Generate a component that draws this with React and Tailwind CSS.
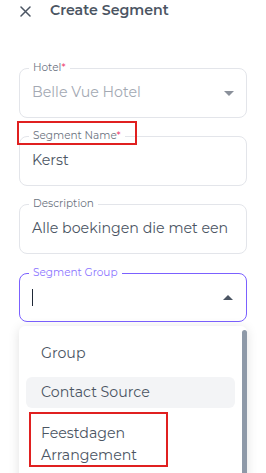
import React from "react";

const font = { fontFamily: "Montserrat, 'Open Sans', 'Noto Sans', sans-serif" };

function Field({ label, required, children, focused, className = "" }) {
  return (
    <div
      className={`relative mx-[19px] h-[50px] rounded-[8px] border ${
        focused ? "border-[#7b61ff]" : "border-[#e3e5ea]"
      } ${className}`}
    >
      <div
        className={`absolute left-[9px] top-[-8px] bg-white px-[4px] text-[10.5px] leading-[14px] ${
          focused ? "text-[#8b74ff]" : "text-[#6b7280]"
        }`}
      >
        {label}
        {required && <span className="text-[#ef4470]">*</span>}
      </div>
      {children}
    </div>
  );
}

export default function App() {
  return (
    <div className="relative h-[473px] w-[266px] overflow-hidden bg-white" style={font}>
      <div className="flex h-[22px] items-center pl-[20px]">
        <svg width="11" height="11" viewBox="0 0 11 11" className="mt-[1px]">
          <path d="M1 1L10 10M10 1L1 10" stroke="#4b5563" strokeWidth="1.5" strokeLinecap="round" />
        </svg>
        <span className="ml-[19px] text-[14.2px] font-semibold text-[#4b5563]">Create Segment</span>
      </div>

      <div className="mt-[46px] flex flex-col">
        <Field label="Hotel" required>
          <div className="flex h-full items-center justify-between pl-[12px] pr-[12px]">
            <span className="text-[14.2px] text-[#a3a9b3]">Belle Vue Hotel</span>
            <svg width="10" height="5" viewBox="0 0 10 5">
              <path d="M0 0H10L5 5Z" fill="#8a909a" />
            </svg>
          </div>
        </Field>
        <Field label="Segment Name" required className="mt-[18px]">
          <div className="flex h-full items-center pl-[12px]">
            <span className="text-[14.2px] text-[#4b5563]">Kerst</span>
          </div>
        </Field>
        <Field label="Description" className="mt-[18px]">
          <div className="flex h-full items-center overflow-hidden whitespace-nowrap pl-[12px]">
            <span className="text-[14.2px] text-[#4b5563]">Alle boekingen die met een</span>
          </div>
        </Field>
        <Field label="Segment Group" focused className="mt-[19px] !h-[49px]">
          <div className="flex h-full items-center justify-between pl-[12px] pr-[13px]">
            <span className="h-[17px] w-[1px] bg-[#1f2937]" />
            <svg width="10" height="5" viewBox="0 0 10 5">
              <path d="M0 5H10L5 0Z" fill="#4b5563" />
            </svg>
          </div>
        </Field>

        <div className="relative mx-[19px] mt-[4px] h-[160px] rounded-[6px] bg-white shadow-[0_2px_12px_rgba(0,0,0,0.12)]">
          <div className="flex flex-col pl-[7px] pr-[12px] pt-[12px] text-[14.2px] text-[#4b5563]">
            <div className="flex h-[31px] items-center pl-[15px]">Group</div>
            <div className="mt-[8px] flex h-[31px] items-center rounded-[6px] bg-[#f3f4f6] pl-[15px]">
              Contact Source
            </div>
            <div className="mt-[14px] pl-[15px] leading-[22px]">
              Feestdagen
              <br />
              Arrangement
            </div>
          </div>
          <div className="absolute right-[0px] top-[4px] h-[160px] w-[5px] rounded-t-[3px] bg-[#8e99a8]" />
        </div>
      </div>

      {/* annotation boxes */}
      <div className="pointer-events-none absolute left-[17px] top-[121px] h-[24px] w-[120px] border-2 border-[#e02020]" />
      <div className="pointer-events-none absolute left-[29px] top-[412px] h-[55px] w-[139px] border-2 border-[#e02020]" />
    </div>
  );
}
